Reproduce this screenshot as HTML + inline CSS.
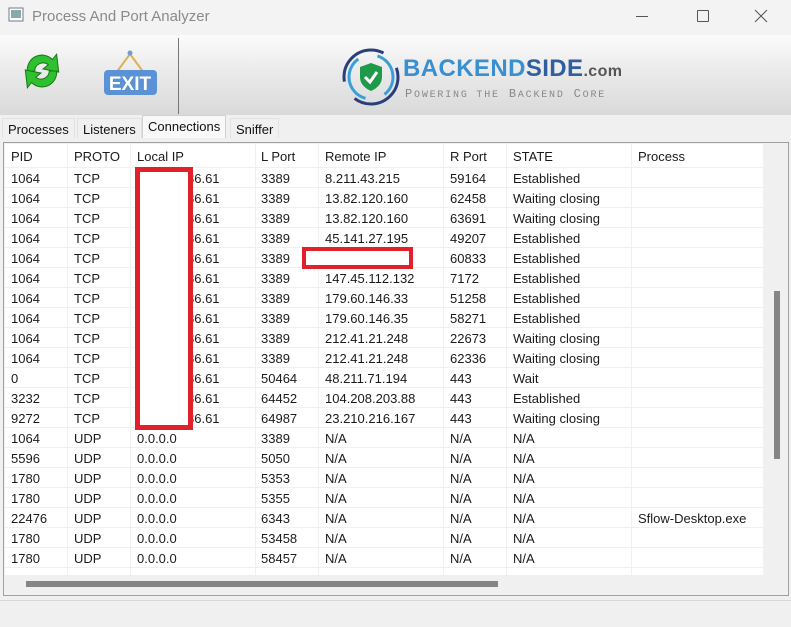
<!DOCTYPE html>
<html><head><meta charset="utf-8"><style>
*{margin:0;padding:0;box-sizing:border-box}
body{width:791px;height:627px;overflow:hidden;background:#f0f0f0;font-family:"Liberation Sans",sans-serif;position:relative}
.title{position:absolute;left:0;top:0;width:791px;height:35px;background:#f3f3f3}
.title .t{position:absolute;left:32px;top:8px;font-size:15px;color:#8a8a8a}
.tb{position:absolute;left:0;top:35px;width:791px;height:80px;background:linear-gradient(#fbfbfb,#e9e9e9 50%,#d9d9d9)}
.tabs{position:absolute;top:115px;left:0;width:791px;height:23px}
.tab{position:absolute;top:3px;height:20px;font-size:13px;color:#111;padding:3px 5px 0;background:#f0f0f0;border:1px solid #e2e2e2;border-bottom:none}
.grid{position:absolute;left:3px;top:142px;width:786px;height:454px;border:1px solid #a0a0a0;background:#f0f0f0}
.list{position:absolute;left:1px;top:1px;width:758px;height:431px;background:#fff;overflow:hidden}
.row{position:absolute;left:0;height:20px;width:758px;border-bottom:1px solid #f0f0f0;font-size:13px;color:#1a1a1a}
.row span{position:absolute;top:3px;white-space:nowrap}
.vl{position:absolute;top:0;width:1px;height:431px;background:#f0f0f0}
.hd span{top:5px}
</style></head><body>
<div class="title">
<svg style="position:absolute;left:8px;top:7px" width="16" height="16"><rect x="1" y="1" width="14" height="13" fill="#fff" stroke="#778" /><rect x="3" y="3" width="10" height="8" fill="#8aa"/></svg>
<div class="t">Process And Port Analyzer</div>
<div style="position:absolute;left:636px;top:16px;width:12px;height:1px;background:#555"></div>
<div style="position:absolute;left:697px;top:10px;width:12px;height:12px;border:1px solid #555;border-radius:1px"></div>
<svg style="position:absolute;left:754px;top:9px" width="14" height="14"><path d="M1 1L13 13M13 1L1 13" stroke="#555" stroke-width="1"/></svg>
</div>
<div class="tb">
<svg style="position:absolute;left:18px;top:12px" width="48" height="48" viewBox="0 0 46 44">
<path d="M9 22 A14 14 0 0 1 33 11 L37 6 L39 23 L24 20 L29 16 A8 8 0 0 0 16 22 Z" fill="#2fc02f" stroke="#1a7a1a"/>
<path d="M37 22 A14 14 0 0 1 13 33 L9 38 L7 21 L22 24 L17 28 A8 8 0 0 0 30 22 Z" fill="#2fc02f" stroke="#1a7a1a"/>
</svg>
<svg style="position:absolute;left:102px;top:10px" width="57" height="55">
<path d="M28 9 L14 28 M28 9 L42 28" stroke="#e0b050" stroke-width="2" fill="none"/>
<circle cx="28" cy="8" r="2.5" fill="#6b9bd8"/>
<rect x="2" y="25" width="53" height="25" rx="4" fill="#5b92d6"/>
<text x="28" y="45" text-anchor="middle" font-family="Liberation Sans" font-weight="bold" font-size="19" fill="#fff">EXIT</text>
</svg>
<div style="position:absolute;left:178px;top:3px;width:1px;height:76px;background:#777"></div>
<svg style="position:absolute;left:340px;top:10px" width="62" height="62">
<circle cx="31" cy="32" r="27" fill="none" stroke="#2a3e7a" stroke-width="3" stroke-dasharray="60 20"/>
<circle cx="31" cy="32" r="22" fill="none" stroke="#3a9fd8" stroke-width="3" stroke-dasharray="50 20" stroke-dashoffset="30"/>
<path d="M31 18 L42 22 L42 32 Q42 41 31 46 Q20 41 20 32 L20 22Z" fill="#1f9a4a"/>
<path d="M25 32 L30 37 L37 27" stroke="#fff" stroke-width="3" fill="none"/>
</svg>
<div style="position:absolute;left:403px;top:20px;font-size:24px;font-weight:bold;color:#3a8fd0;letter-spacing:0.4px">BACKEND<span style="color:#2f5f9f">SIDE</span><span style="font-size:16px;color:#555">.com</span></div>
<div style="position:absolute;left:405px;top:52px;font-size:12px;color:#888;font-family:'Liberation Mono',monospace;letter-spacing:1.8px">P<span style="font-size:10px">OWERING THE</span> B<span style="font-size:10px">ACKEND</span> C<span style="font-size:10px">ORE</span></div>
</div>
<div class="tabs">
<div class="tab" style="left:2px">Processes</div>
<div class="tab" style="left:77px">Listeners</div>
<div class="tab" style="left:142px;top:0;height:23px;background:#f9f9f9;border-color:#d0d0d0">Connections</div>
<div class="tab" style="left:230px">Sniffer</div>
</div>
<div class="grid"><div class="list" id="L">
</div>
<div style="position:absolute;left:770px;top:148px;width:6px;height:168px;background:#858585"></div>
<div style="position:absolute;left:22px;top:438px;width:472px;height:6px;background:#858585"></div>
</div>
<div style="position:absolute;left:0;top:600px;width:791px;height:1px;background:#d8d8d8"></div>
<script>
var cols=[6,69,132,256,320,445,508,633],seps=[62,125,250,313,438,501,626];
var d=[["PID","PROTO","Local IP","L Port","Remote IP","R Port","STATE","Process"],
["1064","TCP","86.61","3389","8.211.43.215","59164","Established",""],
["1064","TCP","86.61","3389","13.82.120.160","62458","Waiting closing",""],
["1064","TCP","86.61","3389","13.82.120.160","63691","Waiting closing",""],
["1064","TCP","86.61","3389","45.141.27.195","49207","Established",""],
["1064","TCP","86.61","3389","","60833","Established",""],
["1064","TCP","86.61","3389","147.45.112.132","7172","Established",""],
["1064","TCP","86.61","3389","179.60.146.33","51258","Established",""],
["1064","TCP","86.61","3389","179.60.146.35","58271","Established",""],
["1064","TCP","86.61","3389","212.41.21.248","22673","Waiting closing",""],
["1064","TCP","86.61","3389","212.41.21.248","62336","Waiting closing",""],
["0","TCP","86.61","50464","48.211.71.194","443","Wait",""],
["3232","TCP","86.61","64452","104.208.203.88","443","Established",""],
["9272","TCP","86.61","64987","23.210.216.167","443","Waiting closing",""],
["1064","UDP","0.0.0.0","3389","N/A","N/A","N/A",""],
["5596","UDP","0.0.0.0","5050","N/A","N/A","N/A",""],
["1780","UDP","0.0.0.0","5353","N/A","N/A","N/A",""],
["1780","UDP","0.0.0.0","5355","N/A","N/A","N/A",""],
["22476","UDP","0.0.0.0","6343","N/A","N/A","N/A","Sflow-Desktop.exe"],
["1780","UDP","0.0.0.0","53458","N/A","N/A","N/A",""],
["1780","UDP","0.0.0.0","58457","N/A","N/A","N/A",""]];
var h="";seps.forEach(function(s){h+='<div class="vl" style="left:'+s+'px"></div>'});
d.forEach(function(r,i){var top=i==0?0:24+(i-1)*20;h+='<div class="row'+(i==0?' hd':'')+'" style="top:'+top+'px;height:'+(i==0?24:20)+'px">';
r.forEach(function(c,j){var x=cols[j];if(i>0&&i<14&&j==2)x=182;h+='<span style="left:'+x+'px">'+c+'</span>'});h+='</div>'});
h+='<div style="position:absolute;left:130px;top:23px;width:58px;height:263px;border:5px solid #e0202a;background:#fff"></div>';
h+='<div style="position:absolute;left:297px;top:103px;width:111px;height:22px;border:4px solid #e0202a;background:#fff"></div>';
document.getElementById("L").innerHTML=h;
</script>
</body></html>
